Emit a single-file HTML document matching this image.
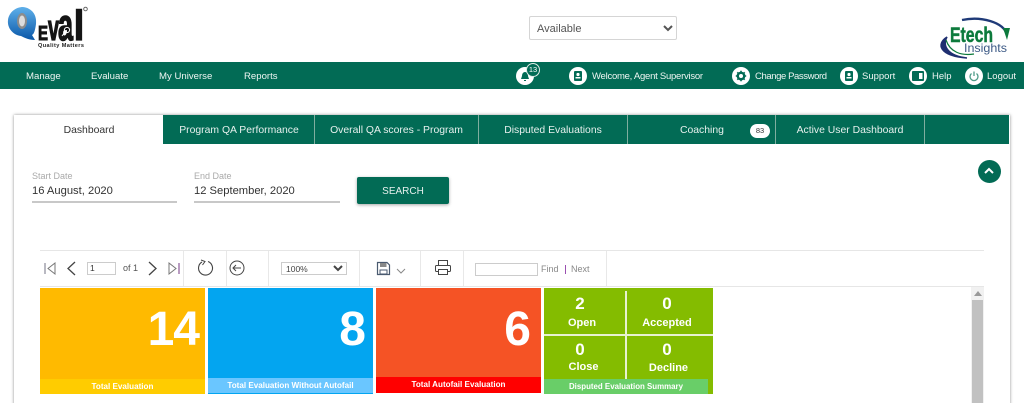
<!DOCTYPE html>
<html lang="en"><head><meta charset="utf-8"><title>QEval Dashboard</title>
<style>
*{box-sizing:border-box}
html,body{margin:0;padding:0;width:1024px;height:403px;overflow:hidden;background:#fff;font-family:"Liberation Sans",sans-serif}
#w{position:relative;width:1024px;height:403px;overflow:hidden}
.a{position:absolute;white-space:nowrap}
.nav{color:#eef5f2;font-size:10px;top:69px;line-height:13px}
.tab{color:#e6f0ed;font-size:10.4px;top:124px;line-height:14px;text-align:center}
.sep{position:absolute;top:115px;height:29px;width:1px;background:#7fae9f}
.bar{position:absolute;top:251px;height:35px;width:1px;background:#e8e8e8}
.ic{position:absolute;width:18px;height:18px;border-radius:50%;background:#fff;top:67px}
.num{color:#fff;font-weight:bold;font-size:48px;line-height:50px;text-align:right;position:absolute}
.foot{position:absolute;color:#fff;font-weight:bold;font-size:8.1px;text-align:center;line-height:15px}
.v{position:absolute;color:#fff;font-weight:bold;text-align:center}
</style></head><body><div id="w">

<!-- QEval logo -->
<svg class="a" style="left:6px;top:5px" width="84" height="46" viewBox="0 0 84 46">
<defs><linearGradient id="b" x1="0" y1="0" x2="0" y2="1"><stop offset="0" stop-color="#5fb0ea"/><stop offset="1" stop-color="#0a57a8"/></linearGradient></defs>
<path d="M2 15C3 7 10 2 17 2 26 3 31 10 30 19 29 26 28 29 26 30L29 35C23 35 19 33 15 31 7 30 1 23 2 15Z" fill="url(#b)"/>
<ellipse cx="16" cy="16" rx="5" ry="8" fill="#8c8c8c"/><ellipse cx="16" cy="16" rx="3" ry="5.5" fill="#ddd"/>
<g font-family="Liberation Sans" font-weight="bold" fill="#151515" stroke="#151515" stroke-width=".9">
<text transform="translate(32 35)" font-size="20" textLength="10" lengthAdjust="spacingAndGlyphs">E</text>
<text transform="translate(42 35) scale(1 1.5)" font-size="24" textLength="11" lengthAdjust="spacingAndGlyphs">v</text>
<text transform="translate(52 35) scale(1 1.7)" font-size="26" textLength="15" lengthAdjust="spacingAndGlyphs">a</text>
<text transform="translate(68 35) scale(1 1.75)" font-size="24" textLength="10" lengthAdjust="spacingAndGlyphs">l</text>
</g>
<circle cx="61" cy="25" r="2.600" fill="none" stroke="#fff" stroke-width="1"/><path d="M59 27l-3 4" stroke="#fff"/>
<circle cx="79.500" cy="4" r="1.800" fill="none" stroke="#666"/>
<text x="32" y="42" font-family="Liberation Sans" font-weight="bold" font-size="5.600" fill="#222" textLength="46">Quality Matters</text>
</svg>

<select class="a" style="left:529px;top:16px;width:148px;height:24px;border:1px solid #d5d5d5;border-radius:2px;background:#fff;color:#555;font:11px 'Liberation Sans',sans-serif;padding:1px 0 0 3px"><option>Available</option></select>

<!-- Etech logo -->
<svg class="a" style="left:936px;top:16px" width="78" height="44" viewBox="0 0 78 44">
<path d="M26 4C45 0 68 6 71 19" fill="none" stroke="#1f3a78" stroke-width="2.400"/>
<path d="M67 12 71 24 74 12Z" fill="#0c7a3c"/>
<path d="M11 21C0 28 3 40 31 42C12 40 6 30 11 21Z" fill="#1f2f70" stroke="#1f2f70" stroke-width="1.500"/>
<path d="M10 24C14 36 25 40 38 38" fill="none" stroke="#0c7a3c" stroke-width="1.200"/>
<text x="14" y="26" font-family="Liberation Sans" font-weight="bold" font-size="21" fill="#0c7a3c" stroke="#0c7a3c" stroke-width=".5" textLength="43" lengthAdjust="spacingAndGlyphs">Etech</text>
<text x="28" y="36" font-family="Liberation Sans" font-size="12" fill="#3d5a86" textLength="43" lengthAdjust="spacingAndGlyphs">Insights</text>
</svg>

<!-- Nav -->
<div class="a" style="left:0;top:62px;width:1024px;height:27px;background:#026b55"></div>
<div class="a nav" style="left:26px;top:70px;font-size:9.6px">Manage</div>
<div class="a nav" style="left:91px;top:70px;font-size:9.6px">Evaluate</div>
<div class="a nav" style="left:159px;top:70px;font-size:9.6px">My Universe</div>
<div class="a nav" style="left:244px;top:70px;font-size:9.6px">Reports</div>

<div class="ic" style="left:516px;top:67px"></div>
<svg class="a" style="left:520px;top:71px" width="10" height="11" viewBox="0 0 10 11"><path d="M5 1C3 1 2 3 2 5L1 8H9L8 5C8 3 7 1 5 1ZM4 9H6V10H4Z" fill="#026b55"/></svg>
<div class="a" style="left:526px;top:63px;width:14px;height:14px;border-radius:50%;background:#026b55;border:1px solid #dfeae6;color:#fff;font-size:7.5px;line-height:12px;text-align:center">13</div>

<div class="ic" style="left:569px"></div>
<svg class="a" style="left:573px;top:71px" width="10" height="10" viewBox="0 0 10 10"><rect x="1" y="0" width="8" height="10" rx="1" fill="#026b55"/><circle cx="5" cy="3.500" r="1.600" fill="#fff"/><rect x="2.500" y="6" width="5" height="1.500" fill="#fff"/></svg>
<div class="a nav" style="left:592px;top:70px;font-size:9.5px;letter-spacing:-.25px">Welcome, Agent Supervisor</div>

<div class="ic" style="left:732px"></div>
<svg class="a" style="left:735px;top:70px" width="12" height="12" viewBox="0 0 12 12"><circle cx="6" cy="6" r="3.200" fill="none" stroke="#026b55" stroke-width="2.400"/><path d="M6 .8V2.500M6 9.500V11.200M.8 6H2.500M9.500 6H11.200M2.300 2.300 3.500 3.500M8.500 8.500 9.700 9.700M2.300 9.700 3.500 8.500M8.500 3.500 9.700 2.300" stroke="#026b55" stroke-width="1.600"/></svg>
<div class="a nav" style="left:755px;top:70px;font-size:9.5px;letter-spacing:-.4px">Change Password</div>

<div class="ic" style="left:840px"></div>
<svg class="a" style="left:844px;top:71px" width="10" height="10" viewBox="0 0 10 10"><rect x="1" y="0" width="8" height="10" rx="1" fill="#026b55"/><circle cx="5" cy="3.500" r="1.600" fill="#fff"/><rect x="2.500" y="6" width="5" height="1.500" fill="#fff"/></svg>
<div class="a nav" style="left:862px;top:70px;font-size:9.5px">Support</div>

<div class="ic" style="left:909px"></div>
<svg class="a" style="left:912px;top:71px" width="12" height="10" viewBox="0 0 12 10"><rect x="0" y="0" width="12" height="10" rx="1" fill="#026b55"/><rect x="7" y="2" width="3.500" height="6" fill="#fff"/></svg>
<div class="a nav" style="left:932px;top:70px;font-size:9.5px">Help</div>

<div class="ic" style="left:965px"></div>
<svg class="a" style="left:968px;top:70px" width="12" height="12" viewBox="0 0 12 12"><path d="M3.500 3.500A4 4 0 1 0 8.500 3.500" fill="none" stroke="#4f9c88" stroke-width="1.300"/><path d="M6 1.500V6" stroke="#4f9c88" stroke-width="1.300"/></svg>
<div class="a nav" style="left:987px;top:70px;font-size:9.5px">Logout</div>

<!-- Card -->
<div class="a" style="left:14px;top:115px;width:996px;height:300px;background:#fff;box-shadow:0 0 3px rgba(0,0,0,.45)"></div>
<div class="a" style="left:163px;top:115px;width:846px;height:29px;background:#026b55"></div>
<div class="a" style="left:15px;top:124px;width:148px;text-align:center;color:#333;font-size:10.4px;line-height:14px">Dashboard</div>
<div class="sep" style="left:314px"></div><div class="sep" style="left:478px"></div><div class="sep" style="left:627px"></div><div class="sep" style="left:775px"></div><div class="sep" style="left:924px"></div>
<div class="a tab" style="left:164px;width:150px">Program QA Performance</div>
<div class="a tab" style="left:315px;width:163px">Overall QA scores - Program</div>
<div class="a tab" style="left:479px;width:148px">Disputed Evaluations</div>
<div class="a tab" style="left:680px">Coaching</div>
<div class="a" style="left:750px;top:124px;width:20px;height:14px;border-radius:7px;background:#fff;color:#333;font-size:7.5px;line-height:14px;text-align:center">83</div>
<div class="a tab" style="left:776px;width:148px">Active User Dashboard</div>

<div class="a" style="left:32px;top:171px;font-size:9px;color:#aaa;line-height:11px">Start Date</div>
<div class="a" style="left:32px;top:184px;font-size:11.2px;color:#333;line-height:14px">16 August, 2020</div>
<div class="a" style="left:32px;top:201px;width:145px;height:2px;background:#c8c8c8"></div>
<div class="a" style="left:194px;top:171px;font-size:9px;color:#aaa;line-height:11px">End Date</div>
<div class="a" style="left:194px;top:184px;font-size:11.2px;color:#333;line-height:14px">12 September, 2020</div>
<div class="a" style="left:194px;top:201px;width:146px;height:2px;background:#c8c8c8"></div>
<div class="a" style="left:357px;top:177px;width:92px;height:27px;background:#026b55;border-radius:2px;box-shadow:0 1px 3px rgba(0,0,0,.35);color:#e6f0ed;font-size:10px;line-height:30px;text-align:center">SEARCH</div>

<div class="a" style="left:977.500px;top:159.500px;width:23px;height:23px;border-radius:50%;background:#026b55"></div>
<svg class="a" style="left:983px;top:166px" width="12" height="10" viewBox="0 0 12 10"><path d="M2 7 6 3 10 7" fill="none" stroke="#fff" stroke-width="2"/></svg>

<!-- Toolbar -->
<div class="a" style="left:40px;top:250px;width:944px;height:1px;background:#e6e6e6"></div>
<div class="a" style="left:40px;top:286px;width:944px;height:1px;background:#e6e6e6"></div>
<div class="bar" style="left:183px"></div><div class="bar" style="left:226px"></div><div class="bar" style="left:268px"></div><div class="bar" style="left:359px"></div><div class="bar" style="left:420px"></div><div class="bar" style="left:463px"></div><div class="bar" style="left:606px"></div>
<svg class="a" style="left:40px;top:258px" width="145" height="22" viewBox="0 0 145 22" fill="none">
<path d="M5 5V16" stroke="#8a8a9a" stroke-width="1.200"/><path d="M15 5 8 10.500 15 16Z" stroke="#777"/>
<path d="M35 4 28 10.500 35 17" stroke="#444" stroke-width="1.300"/>
<path d="M109 4 116 10.500 109 17" stroke="#444" stroke-width="1.300"/>
<path d="M129 5 136 10.500 129 16Z" stroke="#777"/><path d="M139 5V16" stroke="#8a5a9a" stroke-width="1.200"/>
</svg>
<div class="a" style="left:87px;top:262px;width:29px;height:13px;border:1px solid #ccc;font-size:8.500px;line-height:11px;padding-left:2px;color:#333">1</div>
<div class="a" style="left:123px;top:263px;font-size:9px;line-height:11px;color:#555">of 1</div>
<svg class="a" style="left:195px;top:257px" width="22" height="22" viewBox="0 0 22 22" fill="none"><path d="M7 5A7 7 0 1 0 13 4.500" stroke="#444" stroke-width="1.100"/><path d="M6 3 10 4.500 7.500 8" stroke="#444" stroke-width="1"/></svg>
<svg class="a" style="left:228px;top:259px" width="18" height="18" viewBox="0 0 18 18" fill="none"><circle cx="9" cy="9" r="7" stroke="#444" stroke-width="1"/><path d="M13 9H5M8 6 5 9 8 12" stroke="#444"/></svg>
<select class="a" style="left:281px;top:262px;width:66px;height:13px;border:1px solid #ccc;background:#fff;font:8.500px 'Liberation Sans',sans-serif;color:#444;padding:0"><option>100%</option></select>
<svg class="a" style="left:376px;top:261px" width="32" height="16" viewBox="0 0 32 16" fill="none"><path d="M1.500 1.500H11L13.500 4V13.500H1.500Z" stroke="#4a5a70" stroke-width="1.200"/><rect x="4" y="2" width="6.500" height="4" fill="#888"/><rect x="4" y="9" width="7" height="4" stroke="#4a5a70"/><path d="M21 8 25 12 29 8" stroke="#888"/></svg>
<svg class="a" style="left:434px;top:259px" width="18" height="18" viewBox="0 0 18 18" fill="none"><rect x="4.500" y="1.500" width="9" height="5" stroke="#444"/><rect x="1.500" y="6.500" width="15" height="6" rx="1" stroke="#444"/><rect x="4.500" y="10.500" width="9" height="5" fill="#fff" stroke="#444"/></svg>
<div class="a" style="left:475px;top:263px;width:63px;height:13px;border:1px solid #ccc"></div>
<div class="a" style="left:541px;top:264px;font-size:9px;line-height:11px;color:#888">Find</div>
<div class="a" style="left:565px;top:265px;width:1px;height:9px;background:#9a4fb0"></div>
<div class="a" style="left:571px;top:264px;font-size:9px;line-height:11px;color:#888">Next</div>

<!-- Tiles -->
<div class="a" style="left:40px;top:288px;width:165px;height:106px;background:#ffba00"></div>
<div class="foot" style="left:40px;top:379px;width:165px;background:#ffcc00">Total Evaluation</div>
<div class="num" style="left:40px;top:305px;width:159px;letter-spacing:-1px">14</div>

<div class="a" style="left:208px;top:288px;width:165px;height:106px;background:#03a5f0"></div>
<div class="foot" style="left:208px;top:378px;width:165px;background:#6ac6ff">Total Evaluation Without Autofail</div>
<div class="num" style="left:208px;top:305px;width:158px">8</div>

<div class="a" style="left:376px;top:288px;width:165px;height:105px;background:#f55325"></div>
<div class="foot" style="left:376px;top:377px;width:165px;height:16px;background:#ff0000">Total Autofail Evaluation</div>
<div class="num" style="left:376px;top:305px;width:155px">6</div>

<div class="a" style="left:544px;top:288px;width:169px;height:106px;background:#84bc00"></div>
<div class="a" style="left:625px;top:291px;width:2px;height:88px;background:#e8f2d0"></div>
<div class="a" style="left:544px;top:334px;width:169px;height:2px;background:#e8f2d0"></div>
<div class="v" style="left:544px;top:295px;width:72px;font-size:17px;line-height:18px">2</div>
<div class="v" style="left:544px;top:316px;width:76px;font-size:11px;line-height:14px">Open</div>
<div class="v" style="left:627px;top:295px;width:80px;font-size:17px;line-height:18px">0</div>
<div class="v" style="left:627px;top:316px;width:80px;font-size:11px;line-height:14px">Accepted</div>
<div class="v" style="left:544px;top:341px;width:72px;font-size:17px;line-height:18px">0</div>
<div class="v" style="left:544px;top:360px;width:79px;font-size:11px;line-height:14px">Close</div>
<div class="v" style="left:627px;top:341px;width:80px;font-size:17px;line-height:18px">0</div>
<div class="v" style="left:627px;top:361px;width:83px;font-size:11px;line-height:14px">Decline</div>
<div class="foot" style="left:544px;top:379px;width:164px;background:#69ce68;font-size:7.900px">Disputed Evaluation Summary</div>

<!-- Scrollbar -->
<div class="a" style="left:971px;top:287px;width:13px;height:116px;background:#f1f1f1"></div>
<div class="a" style="left:972px;top:300px;width:11px;height:103px;background:#c1c1c1"></div>
<svg class="a" style="left:974px;top:291px" width="8" height="5" viewBox="0 0 8 5"><path d="M4 0 8 5H0Z" fill="#999"/></svg>
</div></body></html>
